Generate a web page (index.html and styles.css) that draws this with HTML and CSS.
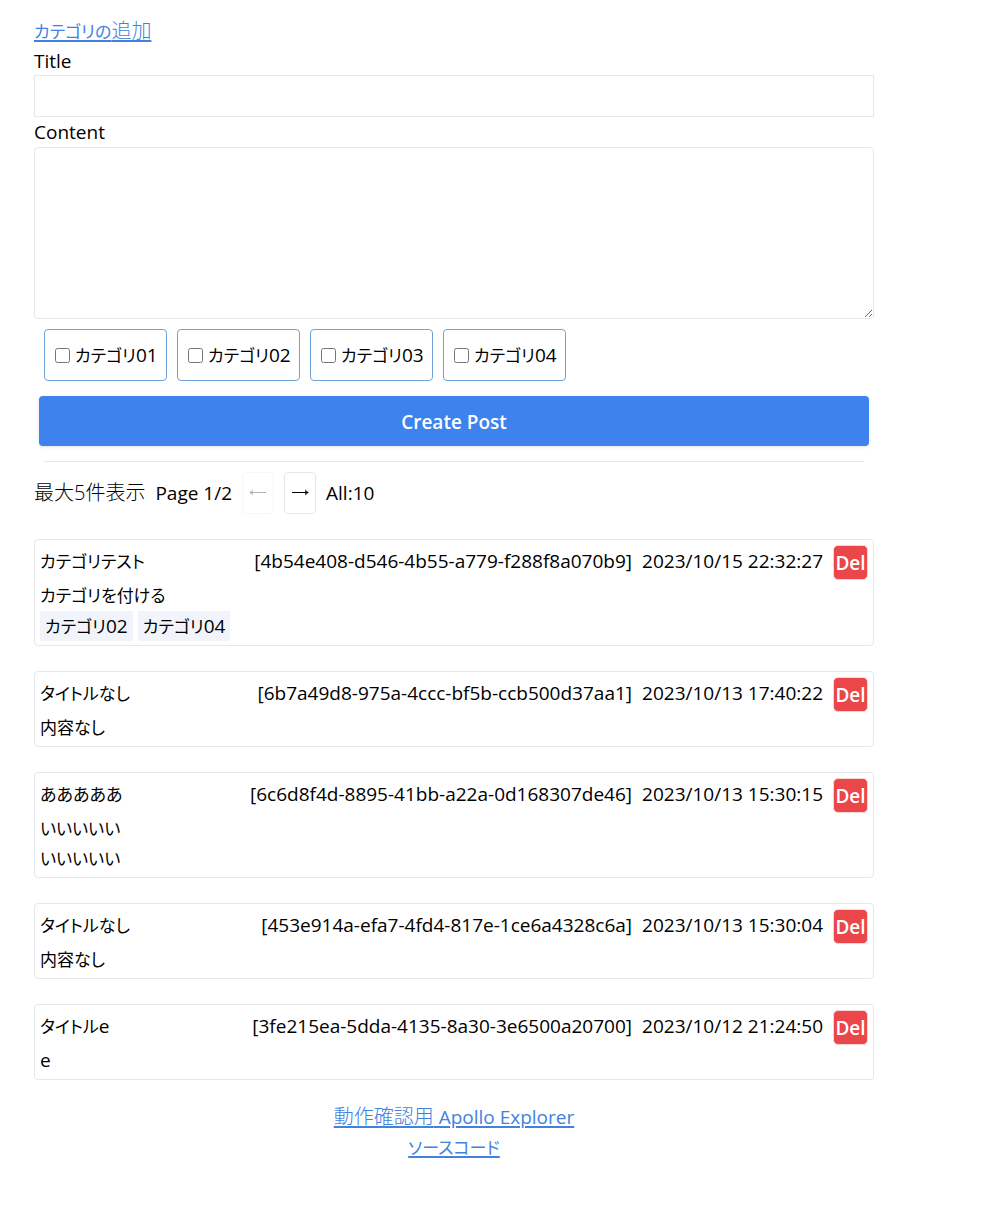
FILE: index.html
```html
<!DOCTYPE html>
<html lang="ja">
<head>
<meta charset="utf-8">
<meta name="viewport" content="width=device-width, initial-scale=1">
<title>Posts</title>
<link rel="stylesheet" href="styles.css">
</head>
<body>
<main class="page">
  <div><a class="link" href="#category"><span class="kana">カテゴリの</span><span class="kanji">追加</span></a></div>
  <form class="form">
    <label class="label" for="title">Title</label>
    <input class="field" id="title" type="text">
    <label class="label" for="content">Content</label>
    <textarea class="field area" id="content"></textarea>
    <div class="choices">
      <label class="choice"><input type="checkbox"><span><span class="kana">カテゴリ</span>01</span></label>
      <label class="choice"><input type="checkbox"><span><span class="kana">カテゴリ</span>02</span></label>
      <label class="choice"><input type="checkbox"><span><span class="kana">カテゴリ</span>03</span></label>
      <label class="choice"><input type="checkbox"><span><span class="kana">カテゴリ</span>04</span></label>
    </div>
    <button class="create" type="button">Create Post</button>
  </form>
  <hr class="rule">
  <nav class="pager">
    <span class="kanji">最大5件表示</span>
    <span>Page 1/2</span>
    <button class="step" type="button" disabled aria-label="Previous"><svg width="20" height="12" viewBox="0 0 20 12"><path class="shaft" d="M18 5.5H2"/><path class="tip" d="M5 2.5L1 5.5l4 3z"/></svg></button>
    <button class="step" type="button" aria-label="Next"><svg width="20" height="12" viewBox="0 0 20 12"><path class="shaft" d="M2 5.5h16"/><path class="tip" d="M15 2.5l4 3-4 3z"/></svg></button>
    <span>All:10</span>
  </nav>
  <section class="posts">
    <article class="post">
      <header class="head"><span class="title"><span class="kana">カテゴリテスト</span></span><span>[4b54e408-d546-4b55-a779-f288f8a070b9]</span><time>2023/10/15 22:32:27</time><button class="del" type="button">Del</button></header>
      <p class="text"><span class="kana">カテゴリを付ける</span></p>
      <div class="tags"><span class="tag"><span class="kana">カテゴリ</span>02</span><span class="tag"><span class="kana">カテゴリ</span>04</span></div>
    </article>
    <article class="post">
      <header class="head"><span class="title"><span class="kana">タイトルなし</span></span><span>[6b7a49d8-975a-4ccc-bf5b-ccb500d37aa1]</span><time>2023/10/13 17:40:22</time><button class="del" type="button">Del</button></header>
      <p class="text"><span class="kana">内容なし</span></p>
    </article>
    <article class="post">
      <header class="head"><span class="title"><span class="kana">あああああ</span></span><span>[6c6d8f4d-8895-41bb-a22a-0d168307de46]</span><time>2023/10/13 15:30:15</time><button class="del" type="button">Del</button></header>
      <p class="text"><span class="kana">いいいいい<br>いいいいい</span></p>
    </article>
    <article class="post">
      <header class="head"><span class="title"><span class="kana">タイトルなし</span></span><span>[453e914a-efa7-4fd4-817e-1ce6a4328c6a]</span><time>2023/10/13 15:30:04</time><button class="del" type="button">Del</button></header>
      <p class="text"><span class="kana">内容なし</span></p>
    </article>
    <article class="post">
      <header class="head"><span class="title"><span class="kana">タイトル</span>e</span><span>[3fe215ea-5dda-4135-8a30-3e6500a20700]</span><time>2023/10/12 21:24:50</time><button class="del" type="button">Del</button></header>
      <p class="text">e</p>
    </article>
  </section>
  <footer class="foot">
    <a class="link" href="#explorer"><span class="kanji">動作確認用</span> Apollo Explorer</a>
    <a class="link" href="#source"><span class="kana">ソースコード</span></a>
  </footer>
</main>
</body>
</html>
```
FILE: styles.css
```css
* { box-sizing: border-box; }
body {
  margin: 0;
  background: #fff;
  color: #000;
  font: 19px/30px "Open Sans", "Noto Sans CJK JP", sans-serif;
}
button, input, textarea { margin: 0; font: inherit; color: inherit; }
.kana, .kanji { line-height: 1; }
.kana { font-size: 17px; font-feature-settings: "palt"; }
.kanji { font-size: 20px; font-weight: 300; }
.page { max-width: 850px; margin: 0 0 0 29px; padding: 16px 5px; }
.link {
  color: #4381e0;
  text-decoration: underline;
  text-decoration-thickness: 2px;
  text-underline-offset: 2px;
}
.label { display: block; height: 29px; }
.field {
  display: block;
  width: 100%;
  height: 42px;
  padding: 5px;
  border: 1px solid #e5e7eb;
  background: #fff;
}
.label + .area { height: 172px; border-radius: 4px; margin-top: 1px; }
.choices { display: flex; flex-wrap: wrap; gap: 10px; padding: 10px; }
.choice {
  display: flex;
  align-items: center;
  gap: 5px;
  min-width: 123px;
  height: 52px;
  padding: 0 8px 0 10px;
  border: 1px solid #6ea3dc;
  border-radius: 4px;
}
.choice input { width: 15px; height: 15px; }
.create {
  display: block;
  width: calc(100% - 10px);
  height: 50px;
  margin: 5px;
  padding: 2px 0 0;
  border: 0;
  border-radius: 4px;
  background: #3e82ee;
  box-shadow: 0 1px 3px #0000001f;
  color: #fff;
  font-weight: 600;
}
.rule { margin: 15px 10px 10px; border: 0; border-top: 1px solid #e5e7eb; }
.pager { display: flex; align-items: center; gap: 10px; }
.step {
  display: grid;
  place-items: center;
  width: 32px;
  height: 42px;
  padding: 0;
  border: 1px solid #e5e7eb;
  border-radius: 4px;
  background: #fff;
}
.step:disabled { opacity: 0.3; }
.shaft { fill: none; stroke: #000; stroke-width: 1; }
.tip { fill: #000; fill-opacity: 0.7; }
.posts { display: grid; gap: 25px; margin-top: 25px; }
.post { padding: 5px 5px 4px; border: 1px solid #e5e7eb; border-radius: 4px; }
.head { display: flex; gap: 10px; height: 35px; line-height: 32px; }
.title { flex: 1; }
.del {
  width: 35px;
  height: 35px;
  padding: 0;
  border: 1px solid #f7d5d6;
  border-radius: 5px;
  background: #eb4649;
  color: #fff;
  font-weight: 600;
}
.text { margin: 0; }
.tags { display: flex; gap: 5px; margin-top: 1px; }
.tag { padding: 0 5px; background: #f1f5fb; }
.foot { display: grid; justify-items: center; margin-top: 22px; }
```
